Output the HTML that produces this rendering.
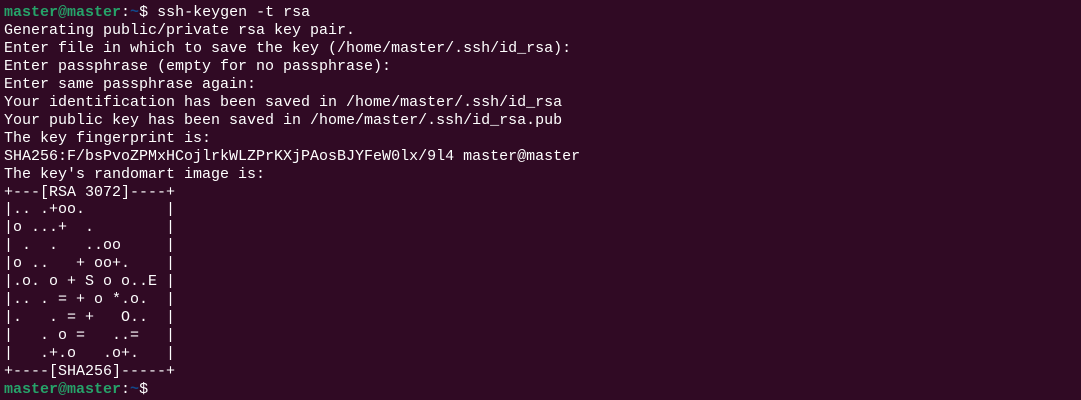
<!DOCTYPE html>
<html><head><style>
html,body{margin:0;padding:0;background:#300a24;width:1081px;height:400px;overflow:hidden}
pre{margin:0;padding:4px 0 0 4px;font-family:"Liberation Mono","DejaVu Sans Mono",monospace;font-size:15px;line-height:17.95px;color:#ffffff;letter-spacing:0}
.g{color:#26a269;font-weight:bold}.b{color:#12488b;font-weight:bold}
</style></head><body><pre><span class="g">master@master</span>:<span class="b">~</span>$ ssh-keygen -t rsa
Generating public/private rsa key pair.
Enter file in which to save the key (/home/master/.ssh/id_rsa):
Enter passphrase (empty for no passphrase):
Enter same passphrase again:
Your identification has been saved in /home/master/.ssh/id_rsa
Your public key has been saved in /home/master/.ssh/id_rsa.pub
The key fingerprint is:
SHA256:F/bsPvoZPMxHCojlrkWLZPrKXjPAosBJYFeW0lx/9l4 master@master
The key's randomart image is:
+---[RSA 3072]----+
|.. .+oo.         |
|o ...+  .        |
| .  .   ..oo     |
|o ..   + oo+.    |
|.o. o + S o o..E |
|.. . = + o *.o.  |
|.   . = +   O..  |
|   . o =   ..=   |
|   .+.o   .o+.   |
+----[SHA256]-----+
<span class="g">master@master</span>:<span class="b">~</span>$ </pre></body></html>
